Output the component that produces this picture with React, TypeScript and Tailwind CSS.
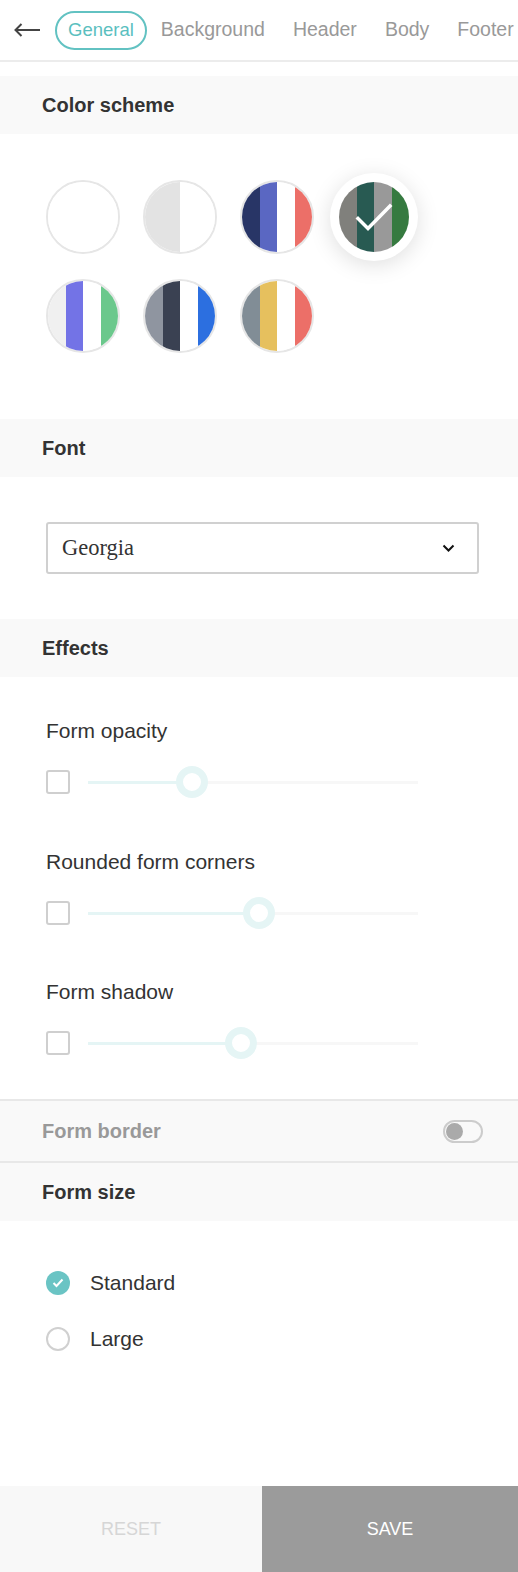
import React from 'react';

const schemes: { stripes: string[]; selected?: boolean }[] = [
  { stripes: ['bg-white'] },
  { stripes: ['bg-[#e3e3e3]', 'bg-white'] },
  { stripes: ['bg-[#283566]', 'bg-[#5a67c2]', 'bg-white', 'bg-[#ec6f68]'] },
  { stripes: ['bg-[#80807c]', 'bg-[#285a52]', 'bg-[#999999]', 'bg-[#367a40]'], selected: true },
  { stripes: ['bg-[#f0f0f0]', 'bg-[#7373e6]', 'bg-white', 'bg-[#6bc88c]'] },
  { stripes: ['bg-[#8f95a0]', 'bg-[#3a4152]', 'bg-white', 'bg-[#2c6fe0]'] },
  { stripes: ['bg-[#818d96]', 'bg-[#e6c05e]', 'bg-white', 'bg-[#ec6f68]'] },
];

const effects = [
  { label: 'Form opacity', fill: 'w-[104px]', thumb: 'left-[88px]', gap: 'mt-[42px]' },
  { label: 'Rounded form corners', fill: 'w-[171px]', thumb: 'left-[155px]', gap: 'mt-[52px]' },
  { label: 'Form shadow', fill: 'w-[153px]', thumb: 'left-[137px]', gap: 'mt-[51px]' },
];

const tabs = ['General', 'Background', 'Header', 'Body', 'Footer'];

function SectionHeader({ title }: { title: string }) {
  return (
    <div className="flex h-[58px] items-center bg-[#f9f9f9] px-[42px] text-[20px] font-bold text-[#333]">
      {title}
    </div>
  );
}

function Swatch({ stripes, selected }: { stripes: string[]; selected?: boolean }) {
  if (selected) {
    return (
      <div className="h-[74px] w-[74px]">
        <div className="-m-[7px] h-[88px] w-[88px] rounded-full bg-white p-[9px] shadow-[0_4px_22px_rgba(0,0,0,0.13)]">
          <div className="relative flex h-[70px] w-[70px] overflow-hidden rounded-full">
            {stripes.map((s, i) => (
              <div key={i} className={`flex-1 ${s}`} />
            ))}
            <svg className="absolute inset-0" width="70" height="70" viewBox="0 0 70 70" fill="none">
              <path d="M19 36.5l10 10L51 24" stroke="white" strokeWidth="3.5" strokeLinecap="square" />
            </svg>
          </div>
        </div>
      </div>
    );
  }
  return (
    <div className="flex h-[74px] w-[74px] overflow-hidden rounded-full border-2 border-[#e6e6e6]">
      {stripes.map((s, i) => (
        <div key={i} className={`flex-1 ${s}`} />
      ))}
    </div>
  );
}

export default function App() {
  return (
    <div className="flex min-h-screen w-[518px] flex-col overflow-hidden bg-white font-['Liberation_Sans',Arial,sans-serif] text-[#333]">
      {/* tabs */}
      <div className="flex h-[62px] shrink-0 items-center border-b-2 border-[#ececec] pl-[14px]">
        <svg width="27" height="14" viewBox="0 0 27 14" fill="none" className="mr-[14px] shrink-0">
          <path d="M26 7H1.5M7.5 1L1.5 7l6 6" stroke="#444" strokeWidth="2" />
        </svg>
        {tabs.map((t, i) => (
          <div
            key={t}
            className={
              i === 0
                ? 'flex h-[39px] shrink-0 items-center rounded-full border-2 border-[#62c2c2] px-[11px] text-[18.5px] text-[#5bbfbf]'
                : 'flex h-[39px] shrink-0 items-center whitespace-nowrap rounded-full border-2 border-transparent px-3 text-[19.5px] text-[#999]'
            }
          >
            {t}
          </div>
        ))}
      </div>

      <div className="h-[14px]" />
      <SectionHeader title="Color scheme" />
      <div className="grid w-fit grid-cols-4 gap-x-[23px] gap-y-[25px] pb-[66px] pl-[46px] pt-[46px]">
        {schemes.map((s, i) => (
          <Swatch key={i} stripes={s.stripes} selected={s.selected} />
        ))}
      </div>

      <SectionHeader title="Font" />
      <div className="px-[46px] py-[45px]">
        <div className="flex h-[52px] w-[433px] items-center justify-between rounded-[3px] border-2 border-[#d0d0d0] pl-[14px] pr-[22px]">
          <span className="font-['Liberation_Serif','DejaVu_Serif',serif] text-[22.5px] text-[#333]">Georgia</span>
          <svg width="13" height="8" viewBox="0 0 13 8" fill="none">
            <path d="M1.5 1.5l5 5 5-5" stroke="#111" strokeWidth="2" />
          </svg>
        </div>
      </div>

      <SectionHeader title="Effects" />
      <div className="pb-[40px] pl-[46px]">
        {effects.map((e) => (
          <div key={e.label} className={e.gap}>
            <div className="text-[21px] leading-[24px] text-[#333]">{e.label}</div>
            <div className="mt-[23px] flex h-8 items-center">
              <div className="h-6 w-6 rounded-[3px] border-2 border-[#cfcfcf]" />
              <div className="relative ml-[18px] h-[3px] w-[330px] bg-[#f7f7f7]">
                <div className={`h-full bg-[#e5f5f5] ${e.fill}`} />
                <div
                  className={`absolute -top-[14.5px] h-8 w-8 rounded-full border-[7px] border-[#e5f5f5] bg-white ${e.thumb}`}
                />
              </div>
            </div>
          </div>
        ))}
      </div>

      <div className="flex h-[64px] items-center justify-between border-y-2 border-[#e8e8e8] bg-[#f9f9f9] pl-[42px] pr-[35px]">
        <span className="text-[20px] font-bold text-[#999]">Form border</span>
        <div className="flex h-[23px] w-[40px] items-center rounded-full border-2 border-[#cccccc] px-[1px]">
          <div className="h-[17px] w-[17px] rounded-full bg-[#aaaaaa]" />
        </div>
      </div>

      <SectionHeader title="Form size" />
      <div className="flex flex-col gap-8 pl-[46px] pt-[50px]">
        <div className="flex items-center gap-5">
          <div className="flex h-6 w-6 items-center justify-center rounded-full bg-[#6ac4c4]">
            <svg width="12" height="10" viewBox="0 0 12 10" fill="none">
              <path d="M1.5 5l3 3 6-6.5" stroke="white" strokeWidth="2" />
            </svg>
          </div>
          <span className="text-[21px] leading-6 text-[#333]">Standard</span>
        </div>
        <div className="flex items-center gap-5">
          <div className="h-6 w-6 rounded-full border-2 border-[#d0d0d0]" />
          <span className="text-[21px] leading-6 text-[#333]">Large</span>
        </div>
      </div>

      <div className="flex-1" />
      <div className="flex h-[86px]">
        <div className="flex w-[262px] items-center justify-center bg-[#f8f8f8] text-[18px] text-[#d6d6d6]">RESET</div>
        <div className="flex flex-1 items-center justify-center bg-[#9b9b9b] text-[18px] text-white">SAVE</div>
      </div>
    </div>
  );
}
